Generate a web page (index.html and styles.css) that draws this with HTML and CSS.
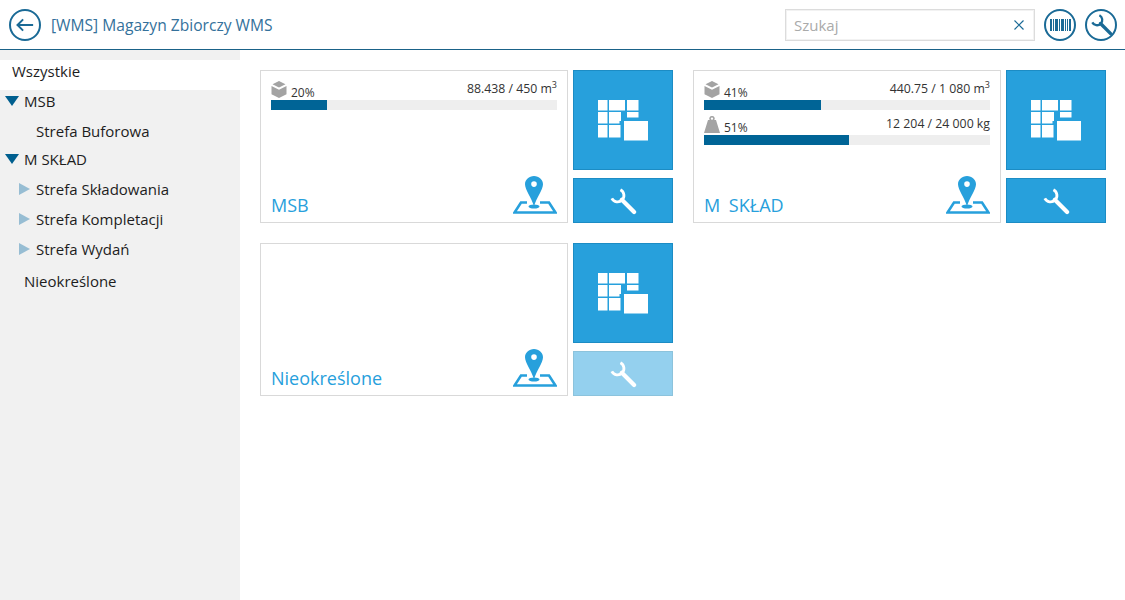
FILE: index.html
```html
<!DOCTYPE html>
<html lang="pl">
<head>
<meta charset="utf-8">
<title>[WMS] Magazyn Zbiorczy WMS</title>
<link rel="stylesheet" href="styles.css">
</head>
<body>
<svg class="defs" width="0" height="0" aria-hidden="true">
  <symbol id="wrench" viewBox="0 0 24 24">
    <path d="M9.800 2.400A5.500 5.500 0 1 1 2.400 9.800" fill="none" stroke="currentColor" stroke-width="2.400"/>
    <path d="M11 11L21.500 21.500" fill="none" stroke="currentColor" stroke-width="3.600" stroke-linecap="round"/>
  </symbol>
  <symbol id="grid" viewBox="0 0 50 41">
    <path fill="#fff" d="M0 0h9.500v10.500H0zM11 0h16v10.500H11zM29 0h11.500v10.500H29zM0 12h9.500v11.500H0zM11 12h12v9h-1.500v2.500H11zM29 12h11.500v5.500H29zM0 25h9.500v12.500H0zM11 25h11.500v12.500H11zM26 21h24v19.500H26z"/>
  </symbol>
  <symbol id="pin" viewBox="0 0 44 38">
    <path d="M14 26.500H8L1.500 36.500h41L36 26.500h-9" fill="none" stroke="#27a0dc" stroke-width="2.600"/>
    <path fill="#27a0dc" fill-rule="evenodd" d="M21 0c-5 0-9 3.700-9 8.300 0 5.200 6.300 13.500 9 21.700 2.700-8.200 9-16.500 9-21.700C30 3.700 26 0 21 0zm0 5.300a2.800 2.800 0 1 1 0 5.600 2.800 2.800 0 0 1 0-5.600z"/>
    <ellipse cx="21" cy="30.500" rx="5.500" ry="2" fill="#27a0dc"/>
  </symbol>
  <symbol id="cube" viewBox="0 0 16 17">
    <path fill="#a3a3a3" d="M8 0l6.500 3.300L8 6.600 1.500 3.300zM.5 5L8 8.700 15.500 5v8.200L8 17 .5 13.200z"/>
  </symbol>
  <symbol id="weight" viewBox="0 0 16 17">
    <path fill="#a3a3a3" fill-rule="evenodd" d="M8 0a2.600 2.600 0 0 1 2.300 4H12l4 13H0L4 4h1.700A2.600 2.600 0 0 1 8 0zm0 1.400a1.200 1.200 0 1 0 0 2.400 1.200 1.200 0 0 0 0-2.400z"/>
  </symbol>
</svg>

<header class="topbar">
  <button class="round-btn back" aria-label="Wstecz">
    <svg viewBox="0 0 32 32" width="20" height="20"><path d="M29 16H4M13 7l-9 9 9 9" fill="none" stroke="currentColor" stroke-width="3.200"/></svg>
  </button>
  <h1 class="title">[WMS] Magazyn Zbiorczy WMS</h1>
  <div class="search">
    <span class="placeholder">Szukaj</span>
    <svg class="clear" viewBox="0 0 10 10" width="10" height="10"><path d="M.5.500l9 9M9.500.500l-9 9" stroke="currentColor" stroke-width="1.200"/></svg>
  </div>
  <button class="round-btn" aria-label="Kod kreskowy">
    <svg viewBox="0 0 21 12" width="21" height="12"><path fill="currentColor" d="M0 0h2v12H0zM3 0h1v12H3zM5 0h3v12H5zM9 0h1v12H9zM11 0h3v12h-3zM15 0h1v12h-1zM17 0h1v12h-1zM19 0h2v12h-2z"/></svg>
  </button>
  <button class="round-btn" aria-label="Ustawienia">
    <svg width="23" height="23"><use href="#wrench"/></svg>
  </button>
</header>

<div class="layout">
  <nav class="sidebar">
    <div class="node selected">Wszystkie</div>
    <div class="node lvl1"><span class="arrow-down"></span>MSB</div>
    <div class="node lvl2 tight">Strefa Buforowa</div>
    <div class="node lvl1"><span class="arrow-down"></span>M SKŁAD</div>
    <div class="node lvl2"><span class="arrow-right"></span>Strefa Składowania</div>
    <div class="node lvl2"><span class="arrow-right"></span>Strefa Kompletacji</div>
    <div class="node lvl2 loose"><span class="arrow-right"></span>Strefa Wydań</div>
    <div class="node lvl1">Nieokreślone</div>
  </nav>

  <main class="content">
    <section class="group">
      <div class="card">
        <div class="stat">
          <div class="stat-head">
            <span class="pct"><svg class="stat-icon" width="16" height="17"><use href="#cube"/></svg>20%</span>
            <span class="amount">88.438 / 450 m<sup>3</sup></span>
          </div>
          <div class="bar"><div class="fill" style="width:19.6%"></div></div>
        </div>
        <div class="card-foot">
          <span class="name">MSB</span>
          <svg class="pin" width="44" height="38"><use href="#pin"/></svg>
        </div>
      </div>
      <div class="actions">
        <button class="tile big"><svg width="50" height="41"><use href="#grid"/></svg></button>
        <button class="tile small"><svg width="28" height="28"><use href="#wrench"/></svg></button>
      </div>
    </section>

    <section class="group">
      <div class="card">
        <div class="stat">
          <div class="stat-head">
            <span class="pct"><svg class="stat-icon" width="16" height="17"><use href="#cube"/></svg>41%</span>
            <span class="amount">440.75 / 1 080 m<sup>3</sup></span>
          </div>
          <div class="bar"><div class="fill" style="width:41%"></div></div>
        </div>
        <div class="stat">
          <div class="stat-head">
            <span class="pct"><svg class="stat-icon" width="16" height="17"><use href="#weight"/></svg>51%</span>
            <span class="amount">12 204 / 24 000 kg</span>
          </div>
          <div class="bar"><div class="fill" style="width:50.8%"></div></div>
        </div>
        <div class="card-foot">
          <span class="name">M SKŁAD</span>
          <svg class="pin" width="44" height="38"><use href="#pin"/></svg>
        </div>
      </div>
      <div class="actions">
        <button class="tile big"><svg width="50" height="41"><use href="#grid"/></svg></button>
        <button class="tile small"><svg width="28" height="28"><use href="#wrench"/></svg></button>
      </div>
    </section>

    <section class="group">
      <div class="card">
        <div class="card-foot">
          <span class="name">Nieokreślone</span>
          <svg class="pin" width="44" height="38"><use href="#pin"/></svg>
        </div>
      </div>
      <div class="actions">
        <button class="tile big"><svg width="50" height="41"><use href="#grid"/></svg></button>
        <button class="tile small disabled"><svg width="28" height="28"><use href="#wrench"/></svg></button>
      </div>
    </section>
  </main>
</div>
</body>
</html>
```

FILE: styles.css
```css
* { box-sizing: border-box; }

html, body {
  margin: 0;
  height: 100%;
  overflow: hidden;
}

body {
  font-family: "Open Sans", "Noto Sans", "Liberation Sans", sans-serif;
  color: #222;
  background: #fff;
}

.defs { position: absolute; }

button {
  font: inherit;
  padding: 0;
  cursor: pointer;
}

.topbar {
  height: 50px;
  display: flex;
  align-items: center;
  padding: 0 8px 0 9px;
  border-bottom: 1px solid #1a6288;
}

.round-btn {
  width: 32px;
  height: 32px;
  flex: none;
  display: flex;
  align-items: center;
  justify-content: center;
  border: 2px solid #1a6a96;
  border-radius: 50%;
  background: #fff;
  color: #1a6a96;
  margin-left: 9px;
}

.back { margin-left: 0; }

.title {
  margin: 0 0 0 10px;
  flex: 1;
  font-size: 15.6px;
  font-weight: 400;
  color: #34719b;
}

.search {
  width: 250px;
  height: 32px;
  display: flex;
  align-items: center;
  justify-content: space-between;
  padding: 0 10px 0 8px;
  border: 1px solid #dcdcdc;
  box-shadow: inset 0 0 0 1px #f2f2f2;
}

.placeholder {
  font-size: 15px;
  color: #aaa;
}

.clear { color: #1a6a96; }

.layout {
  display: flex;
  height: 550px;
}

.sidebar {
  width: 240px;
  flex: none;
  padding-top: 10px;
  background: #f1f1f1;
  font-size: 15px;
  color: #1d1d1d;
}

.node {
  display: flex;
  align-items: center;
  height: 24px;
  padding-bottom: 2px;
  margin-bottom: 6px;
  white-space: nowrap;
}

.selected {
  height: 30px;
  padding: 0 0 8px 12px;
  margin-bottom: 0;
  background: #fff;
}

.lvl1 { padding-left: 24px; }
.lvl2 { padding-left: 36px; }
.tight { margin-bottom: 4px; }
.loose { margin-bottom: 8px; }

.arrow-down {
  width: 0;
  height: 0;
  margin: 0 5px 0 -19px;
  border-style: solid;
  border-width: 10px 7px 0;
  border-color: #005f8f transparent transparent;
}

.arrow-right {
  width: 0;
  height: 0;
  margin: 0 6px 0 -17px;
  border-style: solid;
  border-width: 6.5px 0 6.5px 11px;
  border-color: transparent transparent transparent #97bdd3;
}

.content {
  flex: 1;
  display: grid;
  grid-template-columns: 413px 413px;
  grid-auto-rows: 153px;
  column-gap: 20px;
  row-gap: 20px;
  padding: 20px;
}

.group {
  display: flex;
  gap: 5px;
}

.card {
  width: 308px;
  display: flex;
  flex-direction: column;
  padding: 9px 10px 8px;
  border: 1px solid #d9d9d9;
}

.stat { margin-bottom: 5px; }

.stat-head {
  height: 20px;
  display: flex;
  align-items: flex-start;
  justify-content: space-between;
  font-size: 12.3px;
  line-height: 18px;
  color: #333;
}

.pct {
  display: flex;
  align-items: flex-end;
  gap: 4px;
  height: 18px;
  line-height: 10px;
  font-size: 12px;
}

.stat-icon { flex: none; }

.amount { white-space: nowrap; }

sup {
  font-size: 9px;
  line-height: 0;
}

.bar {
  height: 10px;
  background: #eee;
}

.fill {
  height: 100%;
  background: #006496;
}

.card-foot {
  margin-top: auto;
  display: flex;
  align-items: flex-end;
  justify-content: space-between;
}

.name {
  font-size: 18px;
  line-height: 24px;
  word-spacing: 4px;
  margin-bottom: -3px;
  color: #27a0dc;
}

.pin { display: block; }

.actions {
  width: 100px;
  display: flex;
  flex-direction: column;
  gap: 8px;
}

.tile {
  display: flex;
  align-items: center;
  justify-content: center;
  border: 1px solid #1c8cc4;
  background: #27a0dc;
  color: #fff;
}

.big { height: 100px; }
.small { height: 45px; }

.disabled {
  background: #94d0ee;
  border-color: #8cc3dc;
}
```
